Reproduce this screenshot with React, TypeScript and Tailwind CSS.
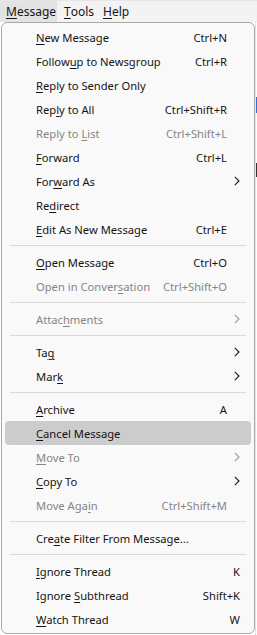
import React from 'react';

type Item = {
  label: string;
  key?: number; // index of access key letter
  shortcut?: string;
  sub?: boolean;
  disabled?: boolean;
  active?: boolean;
  wide?: boolean;
};

const groups: Item[][] = [
  [
    { label: 'New Message', key: 0, shortcut: 'Ctrl+N' },
    { label: 'Followup to Newsgroup', key: 6, shortcut: 'Ctrl+R' },
    { label: 'Reply to Sender Only', key: 0 },
    { label: 'Reply to All', key: 3, shortcut: 'Ctrl+Shift+R' },
    { label: 'Reply to List', key: 9, shortcut: 'Ctrl+Shift+L', disabled: true },
    { label: 'Forward', key: 0, shortcut: 'Ctrl+L' },
    { label: 'Forward As', key: 3, sub: true },
    { label: 'Redirect', key: 2 },
    { label: 'Edit As New Message', key: 0, shortcut: 'Ctrl+E' },
  ],
  [
    { label: 'Open Message', key: 0, shortcut: 'Ctrl+O' },
    { label: 'Open in Conversation', key: 14, shortcut: 'Ctrl+Shift+O', disabled: true },
  ],
  [{ label: 'Attachments', key: 5, sub: true, disabled: true }],
  [
    { label: 'Tag', key: 2, sub: true },
    { label: 'Mark', key: 3, sub: true },
  ],
  [
    { label: 'Archive', key: 0, shortcut: 'A' },
    { label: 'Cancel Message', key: 0, active: true },
    { label: 'Move To', key: 0, sub: true, disabled: true },
    { label: 'Copy To', key: 0, sub: true },
    { label: 'Move Again', key: 8, shortcut: 'Ctrl+Shift+M', disabled: true },
  ],
  [{ label: 'Create Filter From Message...', key: 3 }],
  [
    { label: 'Ignore Thread', key: 0, shortcut: 'K', wide: true },
    { label: 'Ignore Subthread', key: 7, shortcut: 'Shift+K', wide: true },
    { label: 'Watch Thread', key: 0, shortcut: 'W', wide: true },
  ],
];

function Label({ text, k }: { text: string; k?: number }) {
  if (k === undefined) return <>{text}</>;
  return (
    <>
      {text.slice(0, k)}
      <span className="underline underline-offset-[2px] decoration-1">{text[k]}</span>
      {text.slice(k + 1)}
    </>
  );
}

function Chevron({ dim }: { dim?: boolean }) {
  return (
    <svg width="6" height="10" viewBox="0 0 6 10" className={dim ? 'text-[#9a9a9a]' : 'text-[#1b1b1b]'}>
      <path d="M0.8 0.8L5 5L0.8 9.2" fill="none" stroke="currentColor" strokeWidth="1.1" />
    </svg>
  );
}

function Row({ item }: { item: Item }) {
  const color = item.disabled ? 'text-[#858585]' : 'text-[#141414]';
  return (
    <div
      className={`mx-[3px] flex h-6 items-center rounded-[4px] pt-[1px] ${item.active ? 'bg-[#cccccc]' : ''} ${color}`}
    >
      <span className="pl-[31px] flex-1 whitespace-nowrap">
        <Label text={item.label} k={item.key} />
      </span>
      {item.shortcut && (
        <span className={`whitespace-nowrap ${item.wide ? 'pr-[11px]' : 'pr-[24px]'}`}>{item.shortcut}</span>
      )}
      {item.sub && (
        <span className="pr-[11px] -mt-[1px] flex items-center">
          <Chevron dim={item.disabled} />
        </span>
      )}
    </div>
  );
}

export default function App() {
  return (
    <div
      className="w-[257px] h-[635px] overflow-hidden bg-white text-[11.2px] leading-none"
      style={{ fontFamily: '"Noto Sans", "Open Sans", sans-serif' }}
    >
      {/* Menubar */}
      <div className="flex h-[22px] items-stretch bg-[#f3f3f3] border-t border-[#e6e6e6] text-[#141414] text-[12px]">
        <div className="flex w-[57px] items-center bg-[#e3e3e3] pl-[6px] pt-[1px]">
          <Label text="Message" k={0} />
        </div>
        <div className="flex w-[39px] items-center pl-[7px] pt-[1px]">
          <Label text="Tools" k={0} />
        </div>
        <div className="flex items-center pl-[7px] pt-[1px]">
          <Label text="Help" k={0} />
        </div>
      </div>

      <div className="flex h-[613px]">
        {/* Popup */}
        <div className="ml-[1px] w-[254px] h-[612px] rounded-[6px] border border-[#a9a9a9] bg-[#f9f9f9] py-[2px]">
          {groups.map((g, gi) => (
            <React.Fragment key={gi}>
              {gi > 0 && (
                <div className="h-[9px] flex items-center px-[8px]">
                  <div className="h-px w-full bg-[#d9d9d9]" />
                </div>
              )}
              {g.map((it) => (
                <Row key={it.label} item={it} />
              ))}
            </React.Fragment>
          ))}
        </div>
        {/* Window behind */}
        <div className="flex-1 flex flex-col bg-[#fbfbfb] border-l border-[#e4e4e4]">
          <div className="h-[75px]" />
          <div className="h-[16px] bg-[#2f6fd6]" />
          <div className="h-[50px]" />
          <div className="h-[14px] bg-[#333333]" />
          <div className="flex-1" />
        </div>
      </div>
    </div>
  );
}
